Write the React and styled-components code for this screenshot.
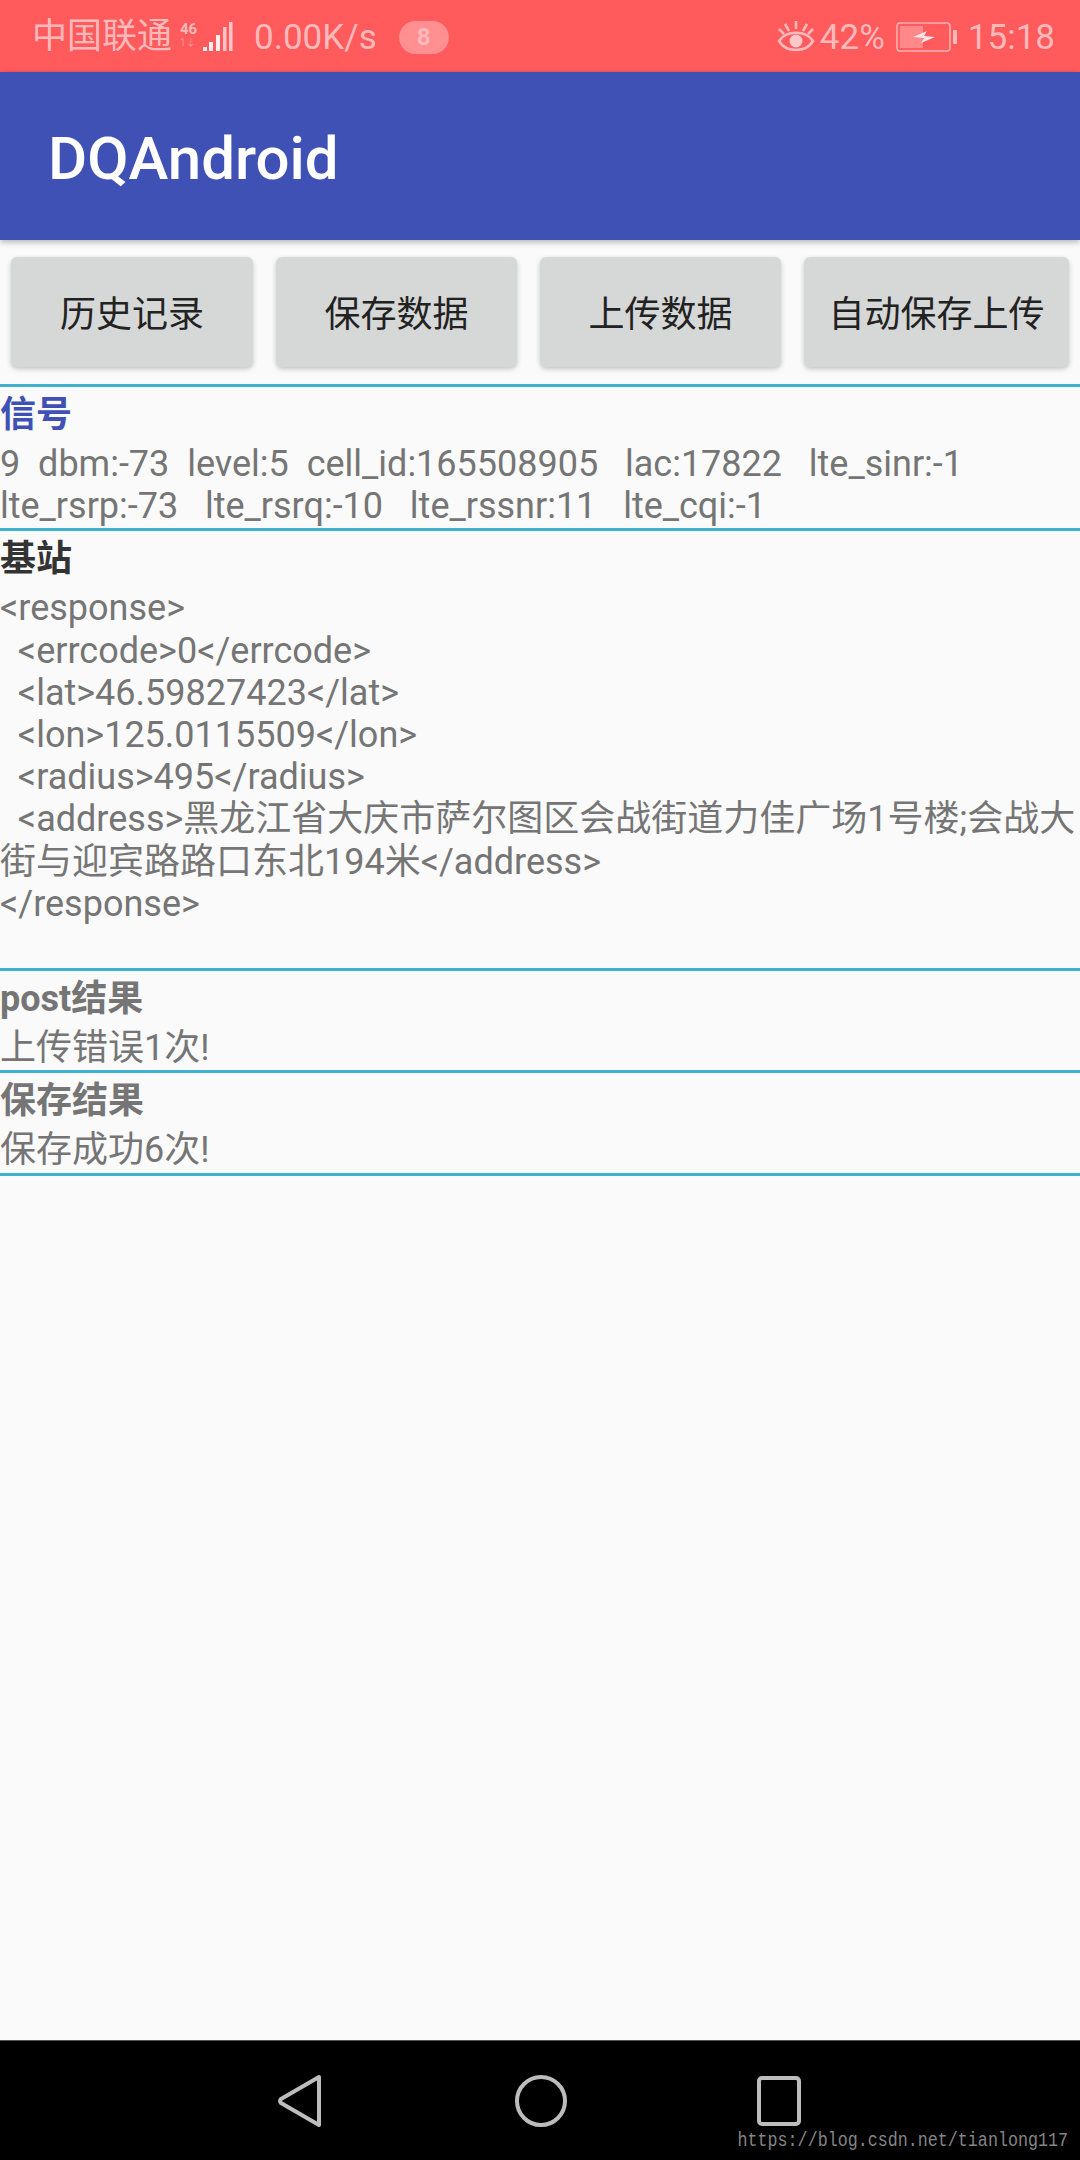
import React from 'react'
import styled, { createGlobalStyle } from 'styled-components'

const Global = createGlobalStyle`
  html, body { margin: 0; padding: 0; background: #fafafa; }
  * { box-sizing: border-box; }
`

const Page = styled.div`
  width: 1080px;
  height: 2160px;
  display: flex;
  flex-direction: column;
  background: #fafafa;
  font-family: Roboto, "Noto Sans CJK SC", sans-serif;
  overflow: hidden;
`

const StatusBar = styled.div`
  height: 72px;
  flex: none;
  display: flex;
  align-items: center;
  justify-content: space-between;
  padding: 2px 25px 0 32px;
  background: #ff5a5c;
  color: #ffb9ba;
`

const StatusSide = styled.div`
  display: flex;
  align-items: center;
`

const Carrier = styled.span`
  font-size: 35px;
  line-height: 70px;
`

const NetBadge = styled.div`
  display: flex;
  flex-direction: column;
  width: 19px;
  height: 32px;
  margin-left: 8px;
  font-size: 15px;
  line-height: 16px;
  font-weight: 700;
`

const NetDown = styled.span`
  font-size: 10px;
  line-height: 12px;
  font-weight: 400;
  opacity: 0.6;
`

const Bars = styled.svg`
  display: block;
  margin-left: 4px;
`

const Speed = styled.span`
  font-size: 35px;
  margin-left: 21px;
`

const Pill = styled.span`
  width: 50px;
  height: 33px;
  margin-left: 22px;
  border-radius: 17px;
  background: #ff8f90;
  font-size: 24px;
  font-weight: 700;
  line-height: 33px;
  text-align: center;
`

const Percent = styled.span`
  font-size: 35px;
  margin-left: 5px;
`

const Battery = styled.svg`
  display: block;
  margin-left: 11px;
`

const Clock = styled.span`
  font-size: 35px;
  margin-left: 10px;
`

const AppBar = styled.div`
  height: 168px;
  flex: none;
  display: flex;
  align-items: center;
  padding: 4px 0 0 48px;
  background: #3f51b5;
  box-shadow: 0 2px 6px rgba(0, 0, 0, 0.3);
  position: relative;
`

const AppTitle = styled.h1`
  margin: 0;
  font-size: 60px;
  font-weight: 500;
  color: #fff;
`

const ButtonRow = styled.div`
  display: grid;
  grid-template-columns: 242px 241px 241px 265px;
  gap: 23px;
  padding: 17px 11px 0;
  height: 144px;
  flex: none;
`

const Action = styled.button`
  height: 110px;
  padding: 0 0 2px;
  border: 0;
  border-radius: 6px;
  background: #d6d7d7;
  box-shadow: 0 2px 5px rgba(0, 0, 0, 0.22);
  color: #222;
  font-family: inherit;
  font-size: 36px;
`

const Section = styled.section`
  border-top: 3px solid #3fb2cf;
  padding: 3px 0 1px;
`

const LastRule = styled.div`
  height: 3px;
  flex: none;
  background: #3fb2cf;
`

const Heading = styled.h2`
  margin: 0 0 3px;
  font-size: 36px;
  line-height: 50px;
  font-weight: 700;
  color: ${p => p.$color || '#757575'};
`

const Body = styled.div`
  font-size: 36px;
  line-height: 42.2px;
  color: #757575;
  white-space: pre-wrap;
  word-break: break-all;
`

const Spacer = styled.div`
  flex: 1;
`

const NavBar = styled.div`
  height: 120px;
  flex: none;
  display: flex;
  align-items: flex-start;
  padding: 33px 0 0 278px;
  background: #000;
  border-top: 1px solid #555;
  position: relative;
`

const NavIcon = styled.svg`
  display: block;
  flex: none;
  width: ${p => p.$w}px;
  height: 54px;
  margin-left: ${p => p.$left}px;
  stroke: #bdbdbd;
  fill: none;
  stroke-width: 4;
`

const Watermark = styled.span`
  position: absolute;
  right: 12px;
  bottom: 9px;
  font-family: "Liberation Mono", monospace;
  font-size: 16.7px;
  line-height: 20px;
  color: #858585;
  transform: scaleY(1.2);
`

const buttons = ['历史记录', '保存数据', '上传数据', '自动保存上传']

const signal = '9  dbm:-73  level:5  cell_id:165508905   lac:17822   lte_sinr:-1\nlte_rsrp:-73   lte_rsrq:-10   lte_rssnr:11   lte_cqi:-1'

const xml = `<response>
  <errcode>0</errcode>
  <lat>46.59827423</lat>
  <lon>125.0115509</lon>
  <radius>495</radius>
  <address>黑龙江省大庆市萨尔图区会战街道力佳广场1号楼;会战大街与迎宾路路口东北194米</address>
</response>
 `

const App = () => {
  return (
    <>
      <Global />
      <Page>
        <StatusBar>
          <StatusSide>
            <Carrier>中国联通</Carrier>
            <NetBadge>
              <span>46</span>
              <NetDown>1↓</NetDown>
            </NetBadge>
            <Bars width="30" height="32" viewBox="0 0 30 32">
              <g fill="#ffc4c5">
                <rect x="0" y="26" width="4" height="4" fill="#fff0f0" />
                <rect x="6" y="21" width="4" height="9" fill="#fff0f0" />
                <rect x="13" y="14" width="4" height="16" fill="#fff0f0" />
                <rect x="20" y="6" width="3.5" height="24" />
                <rect x="26" y="1" width="3.5" height="29" />
              </g>
            </Bars>
            <Speed>0.00K/s</Speed>
            <Pill>8</Pill>
          </StatusSide>
          <StatusSide>
            <svg width="38" height="34" viewBox="0 0 38 34" fill="none" stroke="#ffb9ba" strokeWidth="2.6">
              <path d="M2 21 C9 10 29 10 36 21 C29 33 9 33 2 21Z" />
              <circle cx="19" cy="21" r="6.5" fill="#ffc9ca" stroke="none" />
              <path d="M19 1v8M8 4l4 7M30 4l-4 7M2 9l5 5M36 9l-5 5" />
            </svg>
            <Percent>42%</Percent>
            <Battery width="62" height="30" viewBox="0 0 62 30">
              <rect x="1" y="1" width="53" height="28" rx="3" fill="none" stroke="#ffb0b1" strokeWidth="1.6" />
              <rect x="4" y="4" width="23" height="22" fill="#ffb0b1" opacity="0.55" />
              <path d="M17 15l14-6-3 5 11 1-14 6 3-5z" fill="#ffe6e6" />
              <rect x="57" y="8" width="4" height="14" rx="1" fill="#ffb9ba" />
            </Battery>
            <Clock>15:18</Clock>
          </StatusSide>
        </StatusBar>
        <AppBar>
          <AppTitle>DQAndroid</AppTitle>
        </AppBar>
        <ButtonRow>
          {buttons.map(b => (
            <Action key={b}>{b}</Action>
          ))}
        </ButtonRow>
        <Section>
          <Heading $color="#3f51b5">信号</Heading>
          <Body>{signal}</Body>
        </Section>
        <Section>
          <Heading $color="#333">基站</Heading>
          <Body>{xml}</Body>
        </Section>
        <Section>
          <Heading>post结果</Heading>
          <Body>上传错误1次!</Body>
        </Section>
        <Section>
          <Heading>保存结果</Heading>
          <Body>保存成功6次!</Body>
        </Section>
        <LastRule />
        <Spacer />
        <NavBar>
          <NavIcon $w={44} $left={0} viewBox="0 0 44 54">
            <path d="M41 3 L3 25 Q1 27 3 29 L41 51Z" strokeLinejoin="round" />
          </NavIcon>
          <NavIcon $w={54} $left={192} viewBox="0 0 54 54">
            <circle cx="27" cy="27" r="24" />
          </NavIcon>
          <NavIcon $w={46} $left={188} viewBox="0 0 46 54">
            <rect x="3" y="4" width="40" height="46" rx="3" />
          </NavIcon>
          <Watermark>https://blog.csdn.net/tianlong117</Watermark>
        </NavBar>
      </Page>
    </>
  )
}

export default App
